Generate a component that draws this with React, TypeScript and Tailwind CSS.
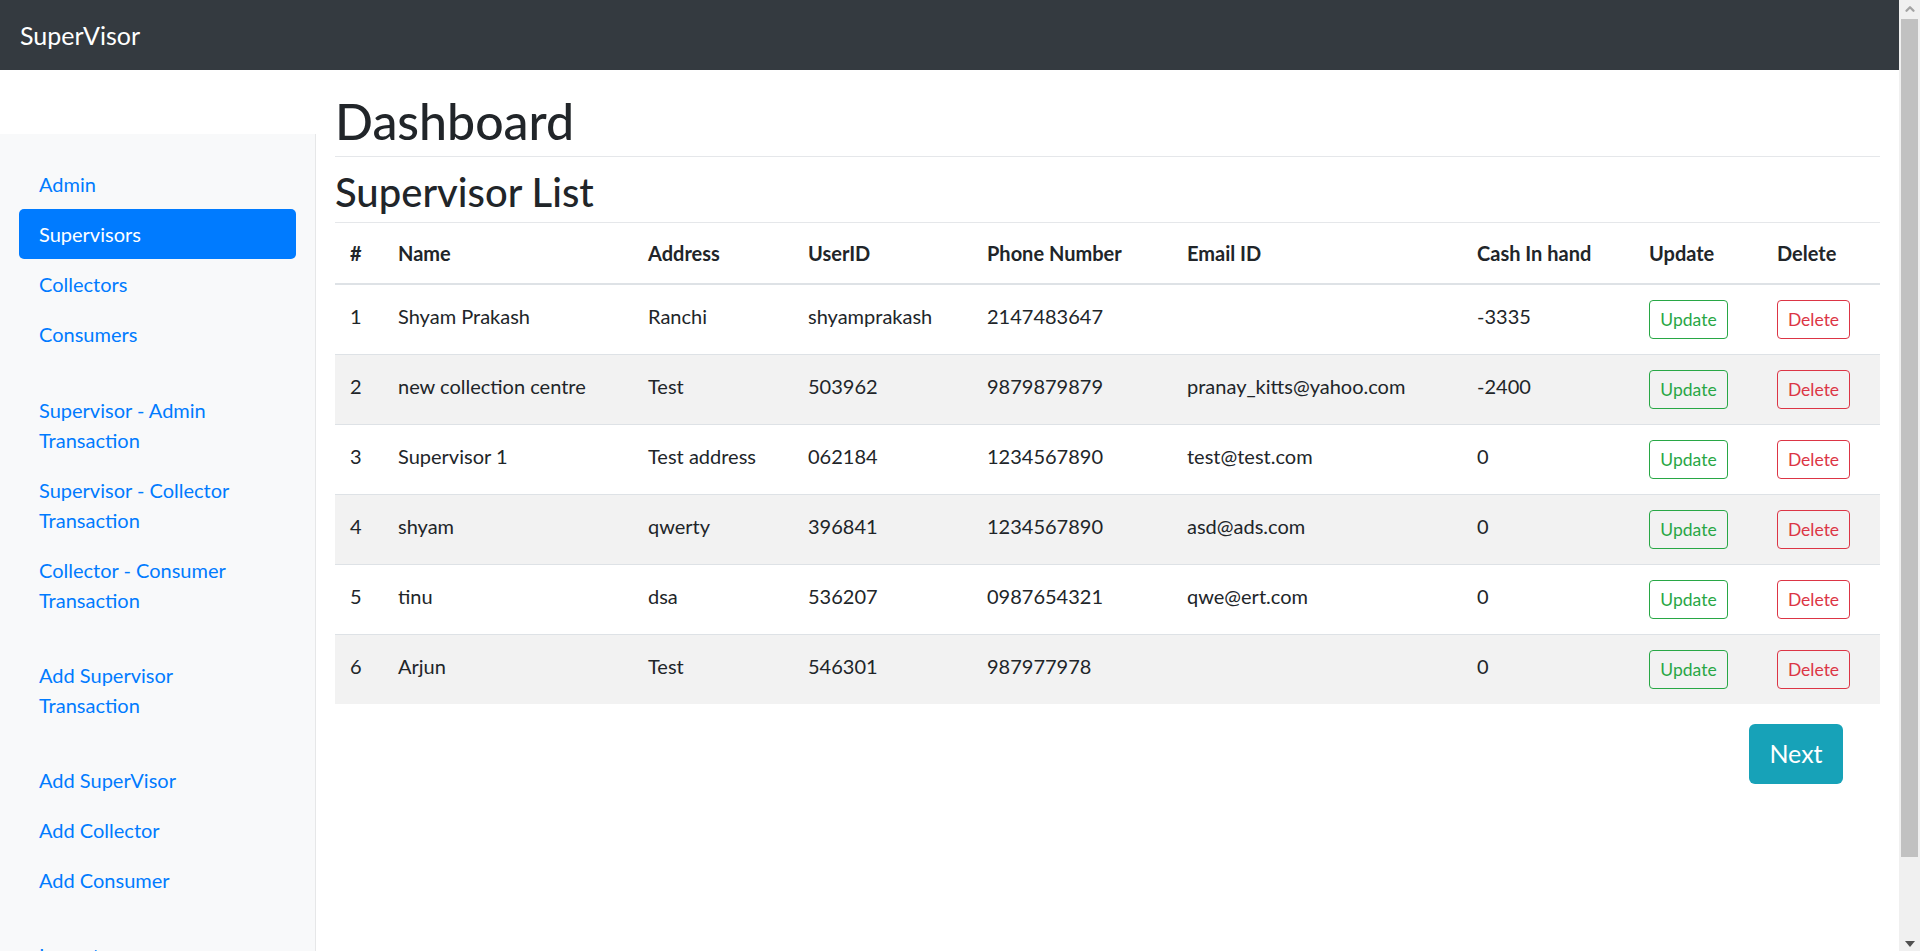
import { ChevronUp } from "lucide-react";

type Supervisor = {
  id: number;
  name: string;
  address: string;
  userId: string;
  phone: string;
  email: string;
  cash: string;
};

const supervisors: Supervisor[] = [
  { id: 1, name: "Shyam Prakash", address: "Ranchi", userId: "shyamprakash", phone: "2147483647", email: "", cash: "-3335" },
  { id: 2, name: "new collection centre", address: "Test", userId: "503962", phone: "9879879879", email: "pranay_kitts@yahoo.com", cash: "-2400" },
  { id: 3, name: "Supervisor 1", address: "Test address", userId: "062184", phone: "1234567890", email: "test@test.com", cash: "0" },
  { id: 4, name: "shyam", address: "qwerty", userId: "396841", phone: "1234567890", email: "asd@ads.com", cash: "0" },
  { id: 5, name: "tinu", address: "dsa", userId: "536207", phone: "0987654321", email: "qwe@ert.com", cash: "0" },
  { id: 6, name: "Arjun", address: "Test", userId: "546301", phone: "987977978", email: "", cash: "0" },
];

function NavItem({ lines, active = false }: { lines: string[]; active?: boolean }) {
  return (
    <li>
      <a
        href="#"
        className={
          "block rounded-[5px] px-[20px] py-[10px] text-[20px] leading-[30px] " +
          (active ? "bg-[#007bff] text-white" : "text-[#007bff]")
        }
      >
        {lines.map((l) => (
          <span key={l} className="block">
            {l}
          </span>
        ))}
      </a>
    </li>
  );
}

function Sidebar() {
  return (
    <nav className="mt-[64px] w-[316px] shrink-0 border-r border-[#e6e7e8] bg-[#f8f9fa] pt-[25px]">
      <ul className="mx-[19px] flex flex-col">
        <NavItem lines={["Admin"]} />
        <NavItem lines={["Supervisors"]} active />
        <NavItem lines={["Collectors"]} />
        <NavItem lines={["Consumers"]} />
      </ul>
      <ul className="mx-[19px] mt-[26px] flex flex-col">
        <NavItem lines={["Supervisor - Admin", "Transaction"]} />
        <NavItem lines={["Supervisor - Collector", "Transaction"]} />
        <NavItem lines={["Collector - Consumer", "Transaction"]} />
      </ul>
      <ul className="mx-[19px] mt-[25px] flex flex-col">
        <NavItem lines={["Add Supervisor", "Transaction"]} />
      </ul>
      <ul className="mx-[19px] mt-[25px] flex flex-col">
        <NavItem lines={["Add SuperVisor"]} />
        <NavItem lines={["Add Collector"]} />
        <NavItem lines={["Add Consumer"]} />
      </ul>
      <ul className="mx-[19px] mt-[25px] flex flex-col">
        <NavItem lines={["Logout"]} />
      </ul>
    </nav>
  );
}

const headers = [
  { label: "#", w: "w-[48px]" },
  { label: "Name", w: "w-[250px]" },
  { label: "Address", w: "w-[160px]" },
  { label: "UserID", w: "w-[179px]" },
  { label: "Phone Number", w: "w-[200px]" },
  { label: "Email ID", w: "w-[290px]" },
  { label: "Cash In hand", w: "w-[172px]" },
  { label: "Update", w: "w-[128px]" },
  { label: "Delete", w: "" },
];

function SupervisorTable() {
  return (
    <table className="w-full table-fixed border-collapse text-left text-[20px] leading-[30px] text-[#212529]">
      <thead>
        <tr>
          {headers.map((h) => (
            <th
              key={h.label}
              className={h.w + " border-t border-b-2 border-t-[#e5e7ea] border-b-[#dee2e6] px-[15px] pt-[15px] pb-[15px] align-bottom font-bold"}
            >
              {h.label}
            </th>
          ))}
        </tr>
      </thead>
      <tbody>
        {supervisors.map((s, i) => (
          <tr key={s.id} className={i % 2 === 1 ? "bg-[#f2f2f2]" : ""}>
            <td className="border-t border-[#dee2e6] px-[15px] pt-[16px] pb-[15px] align-top">{s.id}</td>
            <td className="border-t border-[#dee2e6] px-[15px] pt-[16px] pb-[15px] align-top">{s.name}</td>
            <td className="border-t border-[#dee2e6] px-[15px] pt-[16px] pb-[15px] align-top">{s.address}</td>
            <td className="border-t border-[#dee2e6] px-[15px] pt-[16px] pb-[15px] align-top">{s.userId}</td>
            <td className="border-t border-[#dee2e6] px-[15px] pt-[16px] pb-[15px] align-top">{s.phone}</td>
            <td className="border-t border-[#dee2e6] px-[15px] pt-[16px] pb-[15px] align-top">{s.email}</td>
            <td className="border-t border-[#dee2e6] px-[15px] pt-[16px] pb-[15px] align-top">{s.cash}</td>
            <td className="border-t border-[#dee2e6] px-[15px] py-[15px] align-top">
              <button className="h-[39px] w-[79px] rounded-[4px] border border-[#28a745] text-[17.5px] leading-[26px] text-[#28a745]">
                Update
              </button>
            </td>
            <td className="border-t border-[#dee2e6] px-[15px] py-[15px] align-top">
              <button className="h-[39px] w-[73px] rounded-[4px] border border-[#dc3545] text-[17.5px] leading-[26px] text-[#dc3545]">
                Delete
              </button>
            </td>
          </tr>
        ))}
      </tbody>
    </table>
  );
}

function FakeScrollbar() {
  return (
    <div className="flex w-[21px] shrink-0 flex-col items-center bg-[#f0f0f0]">
      <ChevronUp className="mt-[2px] h-[14px] w-[14px] text-[#a3a3a3]" strokeWidth={4} />
      <div className="mt-[3px] h-[838px] w-[17px] bg-[#c1c1c1]" />
      <div className="mt-auto mb-[4px] h-0 w-0 border-x-[5px] border-t-[6px] border-x-transparent border-t-[#505050]" />
    </div>
  );
}

export default function App() {
  return (
    <div className="flex h-[951px] w-full overflow-hidden bg-white font-['Lato','Noto_Sans',sans-serif] text-[#212529]">
      <div className="flex min-w-0 flex-1 flex-col">
        <header className="flex h-[70px] shrink-0 items-center bg-[#343a40] px-[20px]">
          <span className="text-[25px] leading-[38px] text-white">SuperVisor</span>
        </header>
        <div className="flex min-h-0 flex-1">
          <Sidebar />
          <main className="min-w-0 flex-1 px-[19px]">
            <div className="flex h-[87px] items-end border-b border-[#e5e7ea] pb-[5px]">
              <h1 className="text-[50px] leading-[60px] font-medium">Dashboard</h1>
            </div>
            <h2 className="h-[65px] pt-[11px] text-[40px] leading-[48px] font-medium">Supervisor List</h2>
            <SupervisorTable />
            <div className="mt-[20px] flex justify-end pr-[37px]">
              <button className="h-[60px] w-[94px] rounded-[6px] bg-[#17a2b8] text-[25px] text-white">Next</button>
            </div>
          </main>
        </div>
      </div>
      <FakeScrollbar />
    </div>
  );
}
